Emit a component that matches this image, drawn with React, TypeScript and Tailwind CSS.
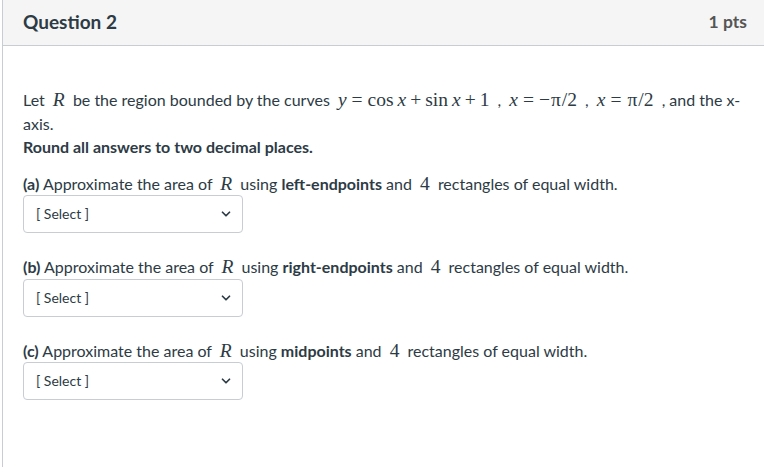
import { ChevronDown } from 'lucide-react';

const M = ({ children }: { children: React.ReactNode }) => (
  <span className="font-['Liberation_Serif',serif] text-[19.5px] leading-none mx-[4px] whitespace-nowrap">{children}</span>
);
const V = ({ children }: { children: React.ReactNode }) => <i className="italic">{children}</i>;
const Rel = ({ children }: { children: React.ReactNode }) => <span className="mx-[5px]">{children}</span>;
const Bin = ({ children }: { children: React.ReactNode }) => <span className="mx-[4px]">{children}</span>;

const SelectBox = () => (
  <div className="w-[220px] h-[38px] border border-[#c7cdd1] rounded-[4px] flex items-center justify-between pl-[12px] pr-[9px] text-[14px] text-[#2d3b45] bg-white">
    <span>[ Select ]</span>
    <ChevronDown size={14} strokeWidth={3} className="text-[#2d3b45]" />
  </div>
);

const parts = [
  { label: '(a)', method: 'left-endpoints' },
  { label: '(b)', method: 'right-endpoints' },
  { label: '(c)', method: 'midpoints' },
];

export default function App() {
  return (
    <div className="w-[764px] h-[467px] bg-white font-['Lato','Liberation_Sans',sans-serif] text-[#2d3b45] overflow-hidden">
      <div className="ml-[2px] border-l border-[#c7cdd1] h-full">
        {/* Header */}
        <header className="h-[46px] bg-[#f5f5f5] border-b border-[#c7cdd1] flex items-center justify-between pl-[20px] pr-[17px]">
          <h2 className="text-[19px] font-bold text-[#2d3b45]">Question 2</h2>
          <span className="text-[17.5px] font-bold text-[#555]">1 pts</span>
        </header>

        {/* Body */}
        <div className="pl-[20px] pr-[10px] pt-[42px] text-[16px] leading-[23.5px]">
          <p>
            Let <M><V>R</V></M> be the region bounded by the curves{' '}
            <M>
              <V>y</V>
              <Rel>=</Rel>cos<span className="ml-[4px]"><V>x</V></span>
              <Bin>+</Bin>sin<span className="ml-[4px]"><V>x</V></span>
              <Bin>+</Bin>1
            </M>{' '}
            ,{' '}
            <M>
              <V>x</V>
              <Rel>=</Rel>−<span className="mx-[1px]">π</span>/2
            </M>{' '}
            ,{' '}
            <M>
              <V>x</V>
              <Rel>=</Rel><span className="mx-[1px]">π</span>/2
            </M>{' '}
            , and the x-
            <br />
            axis.
          </p>
          <p className="font-bold">Round all answers to two decimal places.</p>

          <div className="mt-[13px] flex flex-col gap-[22px]">
            {parts.map((p) => (
              <div key={p.label}>
                <p>
                  <b>{p.label}</b> Approximate the area of <M><V>R</V></M> using <b>{p.method}</b> and{' '}
                  <M>4</M> rectangles of equal width.
                </p>
                <SelectBox />
              </div>
            ))}
          </div>
        </div>
      </div>
    </div>
  );
}
